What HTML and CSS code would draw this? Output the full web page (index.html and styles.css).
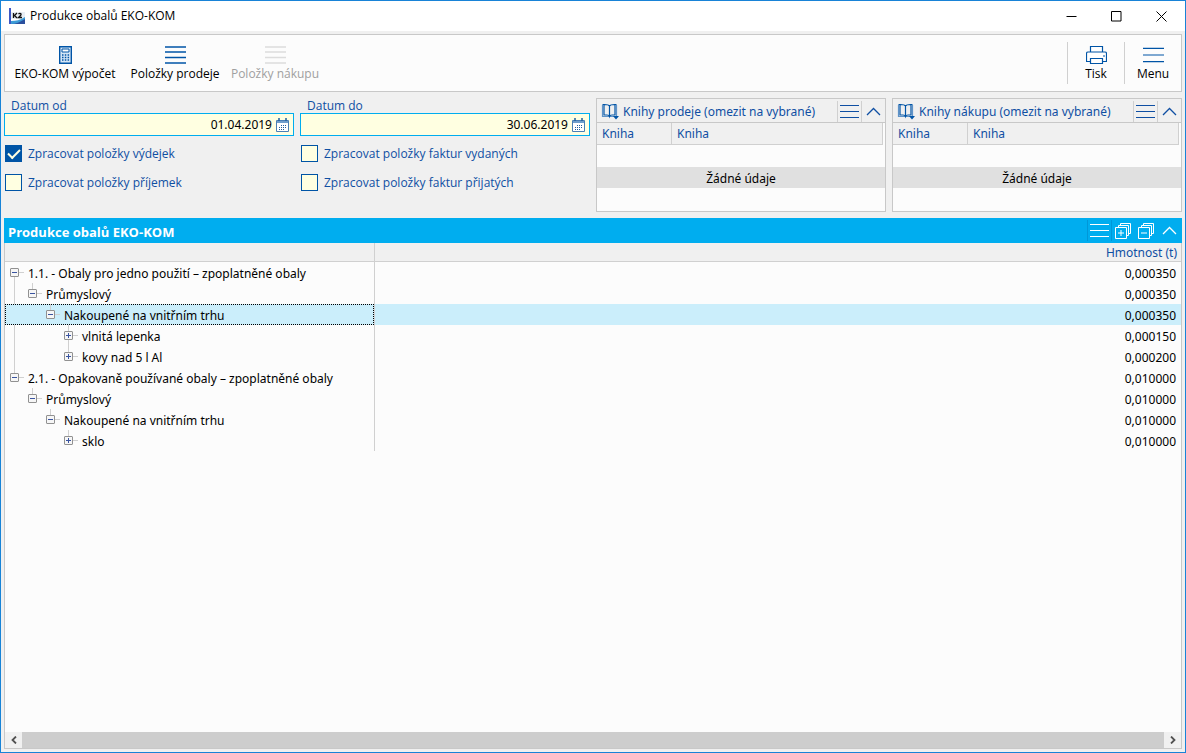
FILE: index.html
```
<!DOCTYPE html>
<html lang="cs">
<head>
<meta charset="utf-8">
<title>Produkce obalů EKO-KOM</title>
<link rel="stylesheet" href="styles.css">
</head>
<body>
<svg class="defs" aria-hidden="true">
  <symbol id="lines" viewBox="0 0 19 13"><path d="M0 .5h19M0 6.5h19M0 12.5h19" fill="none" stroke="currentColor"/></symbol>
  <symbol id="lines4" viewBox="0 0 21 18"><path d="M0 1h21M0 6h21M0 11.500h21M0 17h21" fill="none" stroke="currentColor" stroke-width="1.500"/></symbol>
  <symbol id="chevron" viewBox="0 0 15 9"><path d="M1 8l6.500-6.500L14 8" fill="none" stroke="currentColor" stroke-width="1.300"/></symbol>
  <symbol id="book" viewBox="0 0 18 17"><path d="M1.500 2v11.500h14V2" fill="none" stroke="#5f93c8" stroke-width="1.200"/><path d="M8.500 14V3C7.500 1.500 5.500 1.500 3.500 1.500H1.500M8.500 3C9.500 1.500 11.500 1.500 13.500 1.500H15.500M3 1.500v10.500h3q2 0 2.500 1.500q.5-1.500 2.500-1.500h3V1.500" fill="none" stroke="#0054a6" stroke-width="1.200"/><path d="M12 13h6l-3 3.500z" fill="#0054a6"/></symbol>
  <symbol id="calendar" viewBox="0 0 13 14"><path d="M.5 2.500h12v11H.5z" fill="#fff" stroke="#4a7fb5"/><path d="M1 3h11v2H1z" fill="#6f9ecb"/><path d="M3 0v3M10 0v3" stroke="#225f9c" stroke-width="1.500"/><path d="M5 7.500h6M3 9.500h8M3 11.500h6" stroke="#225f9c" stroke-dasharray="1 1"/></symbol>
  <symbol id="expand" viewBox="0 0 16 16"><path d="M5.500 2.500V.5h10v10h-2M3.500 4.500v-2h10v10h-2M.5 4.500h11v11H.5zM3 10h6M6 7v6" fill="none" stroke="currentColor"/></symbol>
  <symbol id="collapse" viewBox="0 0 16 16"><path d="M5.500 2.500V.5h10v10h-2M3.500 4.500v-2h10v10h-2M.5 4.500h11v11H.5zM3 10h6" fill="none" stroke="currentColor"/></symbol>
</svg>
<div class="window">
  <header class="titlebar">
    <svg class="app-icon" viewBox="0 0 16 16"><path d="M0 0h2v16H0z" fill="#3d57c4"/><path d="M2 4h14v7H2z" fill="#e9eef4"/><path d="M2 16v-3c5 0 9-1 14-4v7z" fill="#3c9bd6"/><path d="M2 16c5 0 9-2 14-5v5z" fill="#2b4f9d"/><path d="M4.500 5v5M8 5L5.500 7.500 8 10M9.500 6C11 4.500 13 6 11.500 7.500L9.500 9.500H13" fill="none" stroke="#111" stroke-width="1.300"/></svg>
    <h1 class="window-title">Produkce obalů EKO-KOM</h1>
    <div class="window-controls">
      <button class="window-button" aria-label="Minimalizovat"><svg viewBox="0 0 11 11"><path d="M.5 5.500h10" stroke="#000"/></svg></button>
      <button class="window-button" aria-label="Maximalizovat"><svg viewBox="0 0 11 11"><path d="M.5.5h9.500v9.500H.5z" fill="none" stroke="#000"/></svg></button>
      <button class="window-button" aria-label="Zavřít"><svg viewBox="0 0 11 11"><path d="M.5.5l10 10M10.500.5l-10 10" stroke="#000"/></svg></button>
    </div>
  </header>
  <main class="content">
    <nav class="toolbar">
      <button class="tool tool-first"><svg class="tool-icon" viewBox="0 0 21 18"><path d="M4.700.7h11.600v16.600H4.700z" fill="#d5e6f6" stroke="#0054a6" stroke-width="1.400"/><path d="M7 3h7v3H7z" fill="#fff" stroke="#0054a6"/><path d="M7 9h7.500M7 11.500h7.500M7 14h7.500" stroke="#0054a6" stroke-width="1.500" stroke-dasharray="1.500 1.300"/></svg>EKO-KOM výpočet</button>
      <button class="tool"><svg class="tool-icon"><use href="#lines4"/></svg>Položky prodeje</button>
      <button class="tool" disabled><svg class="tool-icon"><use href="#lines4"/></svg>Položky nákupu</button>
      <div class="toolbar-end">
        <button class="tool tool-divided"><svg class="tool-icon" viewBox="0 0 21 18"><path d="M4.500 6V.5h12V6M4.500 15.500h-4v-8q0-1.500 1.500-1.500h17q1.500 0 1.500 1.500v8h-4M4.500 12.500h12v5h-12z" fill="#fff" stroke="#0054a6" stroke-width="1.200"/><path d="M17 10h2" stroke="#0054a6"/></svg>Tisk</button>
        <button class="tool tool-divided"><svg class="tool-icon"><use href="#lines"/></svg>Menu</button>
      </div>
    </nav>
    <section class="filters">
      <div class="filter-group">
        <label class="field-label" for="from">Datum od</label>
        <div class="date-field"><input id="from" type="text" value="01.04.2019"><button aria-label="Vybrat datum od"><svg><use href="#calendar"/></svg></button></div>
        <label class="check"><input type="checkbox" checked>Zpracovat položky výdejek</label>
        <label class="check"><input type="checkbox">Zpracovat položky příjemek</label>
      </div>
      <div class="filter-group">
        <label class="field-label" for="to">Datum do</label>
        <div class="date-field"><input id="to" type="text" value="30.06.2019"><button aria-label="Vybrat datum do"><svg><use href="#calendar"/></svg></button></div>
        <label class="check"><input type="checkbox">Zpracovat položky faktur vydaných</label>
        <label class="check"><input type="checkbox">Zpracovat položky faktur přijatých</label>
      </div>
      <section class="books">
        <header class="books-header"><svg class="book-icon"><use href="#book"/></svg><h2>Knihy prodeje (omezit na vybrané)</h2>
          <button class="lines-button" aria-label="Nabídka"><svg><use href="#lines"/></svg></button><button class="chevron-button" aria-label="Sbalit"><svg><use href="#chevron"/></svg></button></header>
        <table class="books-table"><thead><tr><th class="book-code">Kniha</th><th>Kniha</th></tr></thead></table>
        <p class="empty">Žádné údaje</p>
      </section>
      <section class="books">
        <header class="books-header"><svg class="book-icon"><use href="#book"/></svg><h2>Knihy nákupu (omezit na vybrané)</h2>
          <button class="lines-button" aria-label="Nabídka"><svg><use href="#lines"/></svg></button><button class="chevron-button" aria-label="Sbalit"><svg><use href="#chevron"/></svg></button></header>
        <table class="books-table"><thead><tr><th class="book-code">Kniha</th><th>Kniha</th></tr></thead></table>
        <p class="empty">Žádné údaje</p>
      </section>
    </section>
    <section class="report">
      <header class="report-header"><h2>Produkce obalů EKO-KOM</h2>
        <button class="lines-button" aria-label="Nabídka"><svg><use href="#lines"/></svg></button>
        <button class="stack-button" aria-label="Rozbalit vše"><svg><use href="#expand"/></svg></button>
        <button class="stack-button" aria-label="Sbalit vše"><svg><use href="#collapse"/></svg></button>
        <button class="chevron-button" aria-label="Sbalit"><svg><use href="#chevron"/></svg></button></header>
      <div class="report-body">
        <table class="tree">
          <thead><tr><th class="tree-name"></th><th>Hmotnost (t)</th></tr></thead>
          <tbody>
            <tr><td><div class="node"><span class="branch below"><button class="toggle" aria-label="Sbalit"></button></span>1.1. - Obaly pro jedno použití – zpoplatněné obaly</div></td><td>0,000350</td></tr>
            <tr><td><div class="node"><span class="guide line"></span><span class="branch above"><button class="toggle" aria-label="Sbalit"></button></span>Průmyslový</div></td><td>0,000350</td></tr>
            <tr class="selected"><td><div class="node"><span class="guide"></span><span class="guide"></span><span class="branch above"><button class="toggle" aria-label="Sbalit"></button></span>Nakoupené na vnitřním trhu</div></td><td>0,000350</td></tr>
            <tr><td><div class="node"><span class="guide line"></span><span class="guide"></span><span class="guide"></span><span class="branch above below"><button class="toggle closed" aria-label="Rozbalit"></button></span>vlnitá lepenka</div></td><td>0,000150</td></tr>
            <tr><td><div class="node"><span class="guide line"></span><span class="guide"></span><span class="guide"></span><span class="branch above"><button class="toggle closed" aria-label="Rozbalit"></button></span>kovy nad 5 l Al</div></td><td>0,000200</td></tr>
            <tr><td><div class="node"><span class="branch above"><button class="toggle" aria-label="Sbalit"></button></span>2.1. - Opakovaně používané obaly – zpoplatněné obaly</div></td><td>0,010000</td></tr>
            <tr><td><div class="node"><span class="guide"></span><span class="branch above"><button class="toggle" aria-label="Sbalit"></button></span>Průmyslový</div></td><td>0,010000</td></tr>
            <tr><td><div class="node"><span class="guide"></span><span class="guide"></span><span class="branch above"><button class="toggle" aria-label="Sbalit"></button></span>Nakoupené na vnitřním trhu</div></td><td>0,010000</td></tr>
            <tr><td><div class="node"><span class="guide"></span><span class="guide"></span><span class="guide"></span><span class="branch above"><button class="toggle closed" aria-label="Rozbalit"></button></span>sklo</div></td><td>0,010000</td></tr>
          </tbody>
        </table>
        <div class="scrollbar">
          <button aria-label="Posunout vlevo"><svg viewBox="0 0 6 8"><path d="M5 .5L1.500 4 5 7.500" fill="none" stroke="#505050" stroke-width="1.800"/></svg></button>
          <div class="thumb"></div>
          <button aria-label="Posunout vpravo"><svg viewBox="0 0 6 8"><path d="M1 .5L4.500 4 1 7.500" fill="none" stroke="#505050" stroke-width="1.800"/></svg></button>
        </div>
      </div>
    </section>
  </main>
</div>
</body>
</html>
```
FILE: styles.css
```
* { box-sizing: border-box; }
body { margin: 0; font: 12px/16px "Noto Sans", "Open Sans", sans-serif; color: #000; }
h1, h2, p { margin: 0; font-size: inherit; font-weight: 400; }
button { margin: 0; padding: 0; border: 0; background: none; color: inherit; font: inherit; display: flex; align-items: center; justify-content: center; }
svg { display: block; flex: none; }
.defs { display: none; }

.window { height: 100vh; display: flex; flex-direction: column; border: 1px solid #1883d7; background: #f0f0f0; }
.titlebar, .toolbar, .field-label, .check { font-family: "Open Sans", "Noto Sans", sans-serif; }
.titlebar { display: flex; align-items: center; height: 30px; padding-left: 8px; background: #fff; }
.app-icon { width: 16px; height: 16px; }
.window-title { flex: 1; padding-left: 5px; }
.window-controls { display: flex; padding-right: 1px; }
.window-button { width: 45px; height: 28px; }
.window-button svg { width: 11px; height: 11px; }
.content { flex: 1; min-height: 0; display: flex; flex-direction: column; gap: 6px; padding: 3px; }

.toolbar { display: flex; height: 58px; padding: 7px 0; border: 1px solid #c8c8c8; background: #fcfcfc; }
.tool { flex-direction: column; justify-content: flex-start; gap: 2px; width: 100px; padding-top: 4px; white-space: nowrap; }
.tool-first { width: 120px; }
.tool-icon { width: 21px; height: 18px; color: #0054a6; }
.tool:disabled { color: #a0a0a0; }
.tool:disabled .tool-icon { color: #dcdcdc; }
.toolbar-end { display: flex; margin-left: auto; }
.tool-divided { width: 57px; border-left: 1px solid #d0d0d0; }

.filters { display: grid; grid-template-columns: repeat(4, 1fr); gap: 6px; color: #0f4fa3; }
.field-label { display: block; height: 15px; padding-left: 7px; }
.date-field { display: flex; align-items: center; height: 23px; padding-right: 4px; border: 1px solid #00adef; background: #ffffe1; }
.date-field input { flex: 1; min-width: 0; padding: 1px 4px 0 0; border: 0; background: none; font: inherit; color: #000; text-align: right; outline: none; }
.date-field svg { width: 13px; height: 14px; }
.check { display: flex; align-items: center; height: 17px; margin: 9px 0 12px; gap: 6px; padding-left: 1px; }
.check + .check { margin: 0; }
.check input { appearance: none; width: 17px; height: 17px; margin: 0; border: 1px solid #0054a6; background: #ffffe1; }
.check input:checked { display: grid; place-items: center; background: #0054a6; }
.check input:checked::before { content: ""; width: 10px; height: 5px; margin-bottom: 3px; border: solid #ffffe1; border-width: 0 0 2px 2px; transform: rotate(-45deg); }

.books { height: 114px; border: 1px solid #c8c8c8; background: #fcfcfc; }
.books-header { display: flex; align-items: center; height: 24px; padding: 1px 4px 0 4px; border-bottom: 1px solid #c8c8c8; background: #f0f0f0; }
.books-header h2 { flex: 1; padding: 2px 0 0 4px; white-space: nowrap; }
.book-icon { width: 18px; height: 17px; }
.lines-button { width: 25px; height: 21px; border: solid #d0d0d0; border-width: 0 1px; }
.lines-button svg { width: 19px; height: 13px; }
.chevron-button { padding-left: 4px; }
.chevron-button svg { width: 15px; height: 9px; }
.books-table { width: 100%; padding-right: 2px; border-spacing: 0; table-layout: fixed; }
.books-table th { height: 22px; padding: 0 5px; border: solid #d0d0d0; border-width: 0 1px 1px 0; background: #f0f0f0; font-weight: 400; text-align: left; }
.books-table .book-code { width: 75px; }
.empty { margin-top: 22px; padding-top: 2px; background: #e0e0e0; color: #000; line-height: 19px; text-align: center; }

.report { flex: 1; min-height: 0; display: flex; flex-direction: column; }
.report-header { display: flex; align-items: center; height: 25px; padding: 0 5px 0 4px; background: #00adef; color: #fff; }
.report-header h2 { flex: 1; padding-top: 2px; font: 700 13px/16px "Open Sans", "Noto Sans", sans-serif; }
.report-header .lines-button { border-color: #0097d8; }
.stack-button { width: 16px; height: 16px; margin: 0 4px 0 3px; }
.stack-button svg { width: 16px; height: 16px; }
.report-body { flex: 1; display: flex; flex-direction: column; justify-content: space-between; border: 1px solid #c8c8c8; border-top: 0; background: #fcfcfc; }
.tree { width: 100%; border-spacing: 0; table-layout: fixed; }
.tree th { height: 19px; padding: 2px 4px 0; border-bottom: 1px solid #d0d0d0; background: #f0f0f0; color: #0f4fa3; font-weight: 400; line-height: 16px; text-align: right; }
.tree .tree-name { width: 370px; }
.tree th:first-child, .tree td:first-child { border-right: 1px solid #d0d0d0; }
.tree td { height: 21px; padding: 0; }
.tree td:last-child { padding: 2px 5px 0 0; line-height: 19px; text-align: right; }
.selected td { background: #cbeefb; }
.selected .node { outline: 1px dotted #000; outline-offset: -1px; }
.node { display: flex; height: 21px; line-height: 23px; white-space: nowrap; }
.guide, .branch { flex: none; width: 18px; }
.guide.line { background: linear-gradient(#d0d0d0, #d0d0d0) 9px 0 / 1px 100% no-repeat; }
.branch { display: flex; width: 23px; padding: 6px 0 0 5px; background: linear-gradient(#d0d0d0, #d0d0d0) 14px 10px / 5px 1px no-repeat, linear-gradient(#d0d0d0, #d0d0d0) 9px 0 / 1px var(--up, 0) no-repeat, linear-gradient(#d0d0d0, #d0d0d0) 9px 100% / 1px var(--down, 0) no-repeat; }
.above { --up: 6px; }
.below { --down: 6px; }
.toggle { width: 9px; height: 9px; border: 1px solid #919191; border-radius: 1px; background: linear-gradient(#3a54a0, #3a54a0) 1px 3px / 5px 1px no-repeat, #f6f6f6; }
.toggle.closed { background: linear-gradient(#3a54a0, #3a54a0) 1px 3px / 5px 1px no-repeat, linear-gradient(#3a54a0, #3a54a0) 3px 1px / 1px 5px no-repeat, #f6f6f6; }
.scrollbar { display: flex; height: 16px; background: #f0f0f0; }
.scrollbar button { width: 17px; }
.scrollbar svg { width: 6px; height: 8px; }
.thumb { flex: 1; background: #cdcdcd; }
```
